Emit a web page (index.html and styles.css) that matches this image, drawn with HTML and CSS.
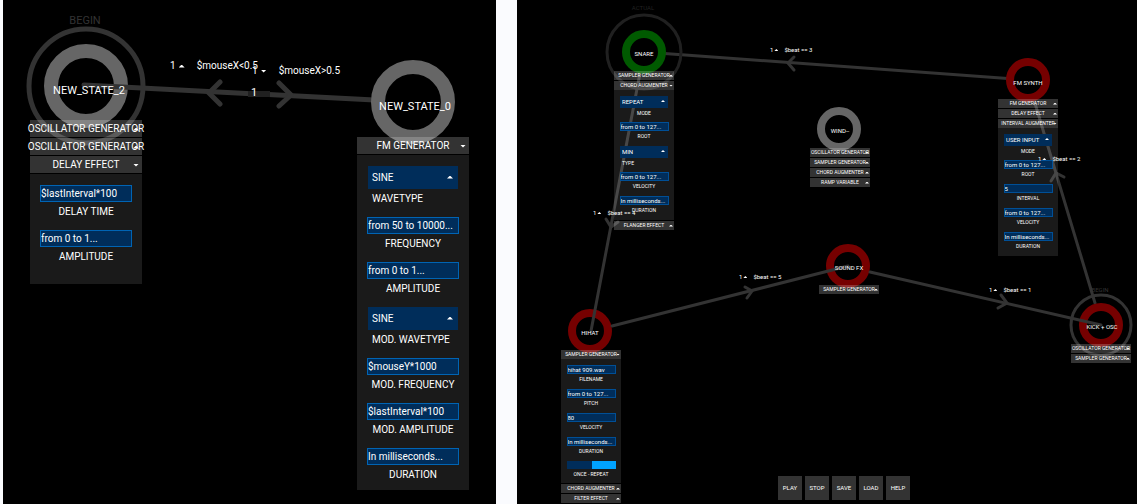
FILE: index.html
```html
<!DOCTYPE html>
<html lang="en">
<head>
<meta charset="utf-8">
<title>State machine sequencer</title>
<link rel="stylesheet" href="styles.css">
</head>
<body>
<main class="page">

<section class="scene scene-large" aria-label="Mouse controlled states">
  <svg class="graph" aria-hidden="true">
    <circle class="ring grey" cx="83" cy="86" r="35"/>
    <circle class="halo" cx="83" cy="86" r="57"/>
    <path class="wire" d="M81 85L410 102"/>
    <path class="wire" d="M217 82L206 93L217 104M276 83L288 95L276 106"/>
    <circle class="ring grey" cx="410" cy="102" r="35"/>
    <rect class="patch" x="245" y="91" width="22" height="6"/>
  </svg>

  <span class="tag dim" style="left:82px;top:20px">BEGIN</span>
  <span class="tag" style="left:86px;top:90px">NEW_STATE_2</span>
  <span class="tag" style="left:412px;top:106px">NEW_STATE_0</span>
  <span class="tag" style="left:251px;top:92px">1</span>
  <span class="rule" style="left:167px;top:66px">1<i class="tri"></i><span>$mouseX&lt;0.5</span></span>
  <span class="rule" style="left:249px;top:71px">1<i class="tri down"></i><span>$mouseX&gt;0.5</span></span>

  <div class="panel" style="left:27px;top:120px">
    <button class="head">OSCILLATOR GENERATOR<i class="tri"></i></button>
    <button class="head">OSCILLATOR GENERATOR<i class="tri"></i></button>
    <button class="head">DELAY EFFECT<i class="tri down"></i></button>
    <div class="body roomy">
      <div class="field"><input id="a1" value="$lastInterval*100"><label for="a1">DELAY TIME</label></div>
      <div class="field"><input id="a2" value="from 0 to 1..."><label for="a2">AMPLITUDE</label></div>
    </div>
  </div>

  <div class="panel" style="left:354px;top:137px">
    <button class="head">FM GENERATOR<i class="tri down"></i></button>
    <div class="body">
      <div class="field pick left"><select id="b1"><option>SINE</option></select><i class="tri"></i><label for="b1">WAVETYPE</label></div>
      <div class="field"><input id="b2" value="from 50 to 10000..."><label for="b2">FREQUENCY</label></div>
      <div class="field"><input id="b3" value="from 0 to 1..."><label for="b3">AMPLITUDE</label></div>
      <div class="field pick left"><select id="b4"><option>SINE</option></select><i class="tri"></i><label for="b4">MOD. WAVETYPE</label></div>
      <div class="field"><input id="b5" value="$mouseY*1000"><label for="b5">MOD. FREQUENCY</label></div>
      <div class="field"><input id="b6" value="$lastInterval*100"><label for="b6">MOD. AMPLITUDE</label></div>
      <div class="field"><input id="b7" value="In milliseconds..."><label for="b7">DURATION</label></div>
    </div>
  </div>
</section>

<section class="scene scene-small" aria-label="Beat controlled states">
  <svg class="graph" aria-hidden="true">
    <circle class="ring red" cx="73" cy="331" r="18"/>
    <path class="wire" d="M127 52L74 331"/>
    <path class="wire" d="M89 219L94 227L101 222"/>
    <path class="wire" d="M511 80L127 52"/>
    <path class="wire" d="M277 57L271 63L277 70"/>
    <circle class="ring green" cx="127" cy="52" r="18"/>
    <circle class="halo faint" cx="127" cy="52" r="37"/>
    <circle class="ring red" cx="331" cy="266" r="18"/>
    <path class="wire" d="M95 326L331 266"/>
    <path class="wire" d="M228 287L235 291L230 298"/>
    <circle class="ring grey" cx="322" cy="129" r="18"/>
    <path class="wire" d="M578 303L511 80"/>
    <path class="wire" d="M534 181L539 173L547 177"/>
    <circle class="ring red" cx="511" cy="80" r="18"/>
    <circle class="ring red" cx="584" cy="325" r="18"/>
    <circle class="halo" cx="584" cy="325" r="30"/>
    <path class="wire" d="M353 272L584 325"/>
    <path class="wire" d="M484 295L490 303L481 308"/>
  </svg>

  <span class="tag faint" style="left:126px;top:8px">ACTUAL</span>
  <span class="tag" style="left:127px;top:54px">SNARE</span>
  <span class="tag" style="left:511px;top:83px">FM SYNTH</span>
  <span class="tag" style="left:323px;top:131px">WIND--</span>
  <span class="tag" style="left:332px;top:268px">SOUND FX</span>
  <span class="tag" style="left:73px;top:333px">HIHAT</span>
  <span class="tag" style="left:585px;top:327px">KICK + OSC</span>
  <span class="tag dim" style="left:583px;top:290px">BEGIN</span>

  <div class="panel" style="left:97px;top:71px">
    <button class="head">SAMPLER GENERATOR<i class="tri"></i></button>
    <button class="head">CHORD AUGMENTER<i class="tri down"></i></button>
    <div class="body">
      <div class="field pick"><select id="c1"><option>REPEAT</option></select><i class="tri"></i><label for="c1">MODE</label></div>
      <div class="field"><input id="c2" value="from 0 to 127..."><label for="c2">ROOT</label></div>
      <div class="field pick left"><select id="c3"><option>MIN</option></select><i class="tri"></i><label for="c3">TYPE</label></div>
      <div class="field"><input id="c4" value="from 0 to 127..."><label for="c4">VELOCITY</label></div>
      <div class="field"><input id="c5" value="In milliseconds..."><label for="c5">DURATION</label></div>
    </div>
    <button class="head">FLANGER EFFECT<i class="tri"></i></button>
  </div>

  <div class="panel" style="left:481px;top:99px">
    <button class="head">FM GENERATOR<i class="tri"></i></button>
    <button class="head">DELAY EFFECT<i class="tri"></i></button>
    <button class="head">INTERVAL AUGMENTER<i class="tri down"></i></button>
    <div class="body">
      <div class="field pick"><select id="d1"><option>USER INPUT</option></select><i class="tri"></i><label for="d1">MODE</label></div>
      <div class="field"><input id="d2" value="from 0 to 127..."><label for="d2">ROOT</label></div>
      <div class="field"><input id="d3" value="5"><label for="d3">INTERVAL</label></div>
      <div class="field"><input id="d4" value="from 0 to 127..."><label for="d4">VELOCITY</label></div>
      <div class="field"><input id="d5" value="In milliseconds..."><label for="d5">DURATION</label></div>
    </div>
  </div>

  <div class="panel" style="left:293px;top:148px">
    <button class="head">OSCILLATOR GENERATOR<i class="tri"></i></button>
    <button class="head">SAMPLER GENERATOR<i class="tri"></i></button>
    <button class="head">CHORD AUGMENTER<i class="tri"></i></button>
    <button class="head">RAMP VARIABLE<i class="tri"></i></button>
  </div>

  <div class="panel" style="left:302px;top:285px">
    <button class="head">SAMPLER GENERATOR<i class="tri"></i></button>
  </div>

  <div class="panel" style="left:554px;top:344px">
    <button class="head">OSCILLATOR GENERATOR<i class="tri"></i></button>
    <button class="head">SAMPLER GENERATOR<i class="tri"></i></button>
  </div>

  <div class="panel" style="left:44px;top:350px">
    <button class="head">SAMPLER GENERATOR<i class="tri down"></i></button>
    <div class="body tight">
      <div class="field"><input id="e1" value="hihat 909.wav"><label for="e1">FILENAME</label></div>
      <div class="field"><input id="e2" value="from 0 to 127..."><label for="e2">PITCH</label></div>
      <div class="field"><input id="e3" value="80"><label for="e3">VELOCITY</label></div>
      <div class="field"><input id="e4" value="In milliseconds..."><label for="e4">DURATION</label></div>
      <div class="field"><input id="e5" class="switch" type="checkbox" checked><label for="e5">ONCE - REPEAT</label></div>
    </div>
    <button class="head">CHORD AUGMENTER<i class="tri"></i></button>
    <button class="head">FILTER EFFECT<i class="tri"></i></button>
    <button class="head" aria-label="More"></button>
  </div>

  <span class="rule" style="left:253px;top:50px">1<i class="tri"></i><span>$beat == 3</span></span>
  <span class="rule" style="left:76px;top:213px">1<i class="tri"></i><span>$beat == 4</span></span>
  <span class="rule" style="left:521px;top:159px">1<i class="tri"></i><span>$beat == 2</span></span>
  <span class="rule" style="left:472px;top:290px">1<i class="tri"></i><span>$beat == 1</span></span>
  <span class="rule" style="left:222px;top:277px">1<i class="tri"></i><span>$beat == 5</span></span>

  <nav class="toolbar">
    <button>PLAY</button><button>STOP</button><button>SAVE</button><button>LOAD</button><button>HELP</button>
  </nav>
</section>

</main>
</body>
</html>
```
FILE: styles.css
```css
* { box-sizing: border-box; }

body {
  margin: 0;
  background: #fafbfe;
  color: #fff;
}

.page {
  display: grid;
  grid-template-columns: 493fr 620fr;
  gap: 21px;
  padding-left: 3px;
  min-height: 100vh;
}

.scene {
  position: relative;
  overflow: hidden;
  background: #000;
  font: var(--text) / 1 "Roboto", "Liberation Sans", sans-serif;
}

.scene-large {
  --text: 10px;
  --value: 10px;
  --name: 11px;
  --panel: 112px;
  --head: 17px;
  --box: 92px;
  --box-h: 17px;
  --pick: 90px;
  --pick-h: 23px;
  --pick-text: 4px;
  --label-h: 19px;
  --field-h: 45px;
  --pick-field-h: 51px;
  --pad: 11px;
  --end: 6px;
  --tri: 6px;
  --tri-h: 3px;
  --tri-right: 3px;
  --rule-gap: 3px;
  --rule-pad: 9px;
  --wire: 5px;
  --ring: 14px;
  --halo: 5px;
  --edge: #0064b4;
}

.scene-small {
  --text: 5px;
  --value: 6px;
  --name: 6px;
  --panel: 60px;
  --head: 9px;
  --box: 49px;
  --box-h: 9px;
  --pick: 48px;
  --pick-h: 12px;
  --pick-text: 2px;
  --label-h: 11px;
  --field-h: 24px;
  --pick-field-h: 26px;
  --pad: 6px;
  --end: 4px;
  --tri: 4px;
  --tri-h: 2px;
  --tri-right: 1px;
  --rule-gap: 1px;
  --rule-pad: 5px;
  --wire: 3px;
  --ring: 8px;
  --halo: 3px;
  --edge: #004f96;
}

button, input, select {
  margin: 0;
  padding: 0;
  border: 0;
  border-radius: 0;
  appearance: none;
  color: inherit;
  font: inherit;
}

.graph {
  position: absolute;
  inset: 0;
  width: 100%;
  height: 100%;
}

.halo, .wire { fill: none; }
.ring { fill: #000; stroke-width: var(--ring); }
.grey { stroke: #666; }
.red { stroke: #760000; }
.green { stroke: #005a00; }
.halo { stroke: #333; stroke-width: var(--halo); }
.halo.faint { stroke: #202020; }
.wire {
  stroke: #333;
  stroke-width: var(--wire);
  stroke-linecap: round;
}
.patch { fill: #202020; }

.tag {
  position: absolute;
  transform: translate(-50%, -50%);
  font-size: var(--name);
  white-space: nowrap;
}
.tag.dim { color: #333; }
.tag.faint { color: #222; }

.rule {
  position: absolute;
  display: flex;
  align-items: center;
  gap: var(--rule-gap);
  transform: translateY(-50%);
  font-size: var(--value);
  white-space: nowrap;
}
.rule span { padding-left: var(--rule-pad); }

.tri {
  width: var(--tri);
  height: var(--tri-h);
  background: #fff;
  clip-path: polygon(50% 0, 100% 100%, 0 100%);
}
.tri.down { clip-path: polygon(0 0, 100% 0, 50% 100%); }

.panel {
  position: absolute;
  display: flex;
  flex-direction: column;
  gap: 1px;
  width: var(--panel);
}

.head {
  position: relative;
  display: flex;
  align-items: center;
  justify-content: center;
  height: var(--head);
  background: rgb(255 255 255 / 0.2);
  white-space: nowrap;
}
.head .tri {
  position: absolute;
  top: calc(50% - 1px);
  right: var(--tri-right);
}

.body {
  display: flex;
  flex-direction: column;
  align-items: center;
  margin-top: -1px;
  padding: var(--pad) 0 var(--end);
  background: rgb(255 255 255 / 0.1);
}
.scene-large .body { margin-top: 0; }
.roomy { padding-bottom: 18px; }
.tight { padding-bottom: 3px; }

.field {
  position: relative;
  display: flex;
  flex-direction: column;
  width: var(--box);
  min-height: var(--field-h);
}
.field:last-child { min-height: 0; }
.field.pick { width: var(--pick); min-height: var(--pick-field-h); }
.field label {
  line-height: var(--label-h);
  text-align: center;
  white-space: nowrap;
}
.field.left label { padding-left: var(--pick-text); text-align: left; }
.field input {
  width: 100%;
  height: var(--box-h);
  border: 1px solid var(--edge);
  background: #002d5a;
  font-size: var(--value);
}
.field select {
  width: 100%;
  height: var(--pick-h);
  padding-left: var(--pick-text);
  background: #002d5a;
  font-size: var(--value);
}
.field .tri {
  position: absolute;
  top: calc(var(--pick-h) / 2 - 2px);
  right: calc(var(--tri) - 1px);
}
.field .switch {
  height: 8px;
  border: 0;
  background: linear-gradient(90deg, #002d5a 50%, #00a2ff 50%);
}

.toolbar {
  position: absolute;
  bottom: 4px;
  left: 261px;
  display: flex;
  gap: 3px;
}
.toolbar button {
  width: 24px;
  height: 24px;
  background: #333;
  font-size: var(--value);
}
```
